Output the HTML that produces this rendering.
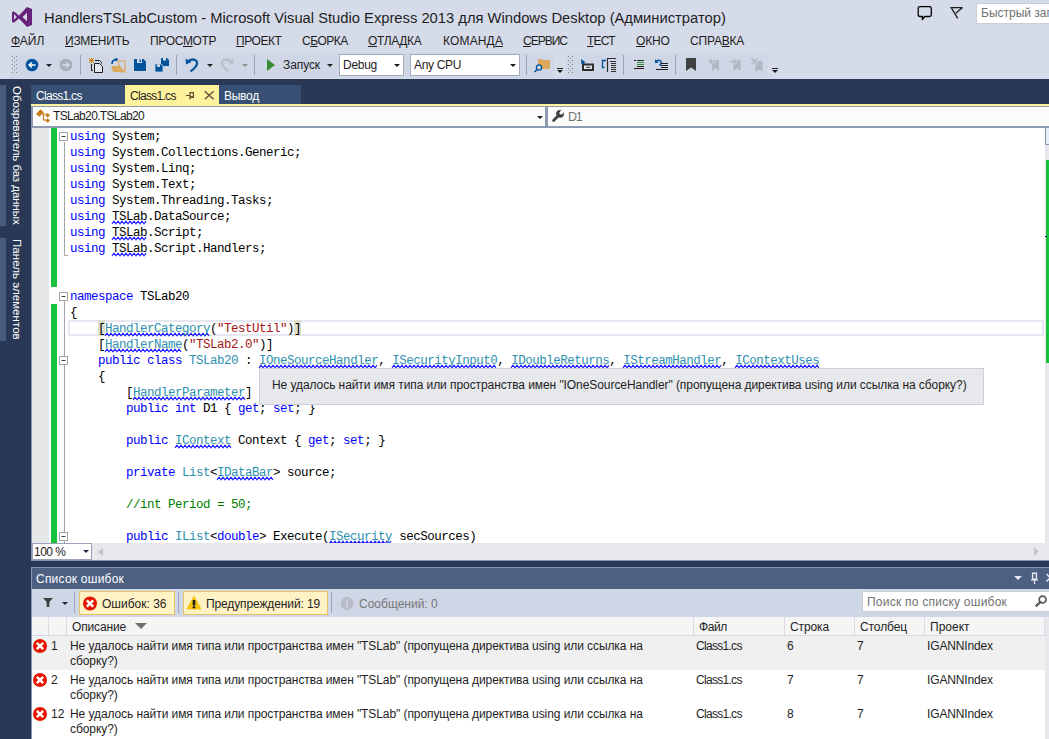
<!DOCTYPE html>
<html><head><meta charset="utf-8">
<style>
*{margin:0;padding:0;box-sizing:border-box}
html,body{width:1049px;height:739px;overflow:hidden;background:#D6DBE9;font-family:"Liberation Sans",sans-serif;font-size:12px;color:#1E1E1E}
.a{position:absolute;white-space:nowrap}
#title{left:44px;top:9px;font-size:15.5px;color:#1E1E1E;transform:scaleX(0.951);transform-origin:0 0}
.mi{top:34px;font-size:12px;color:#1E1E1E}
.mi u{text-decoration:underline}
#tb1{left:10px;top:53px;width:544px;height:25px;background:#CFD6E5}
.combo{background:#fff;border:1px solid #A3AABB}
#tb2{left:566px;top:53px;width:202px;height:25px;background:#CFD6E5}
#dark{left:0;top:79px;width:1049px;height:660px;background:#293955}
.vt{writing-mode:vertical-rl;font-size:11.5px;color:#fff}
.et{font-size:12px;color:#1E1E1E}
.tab{top:85px;height:19px;font-size:12px;padding:4px 0 0 5px;color:#fff}
#yl{left:31px;top:104px;width:1018px;height:2px;background:#FFF29D}

#ed{left:31px;top:128px;width:1018px;height:432px;background:#fff}
#code{left:70px;top:128.5px;font-family:"Liberation Mono",monospace;font-size:12.5px;letter-spacing:-0.5px;line-height:16px;color:#000;white-space:pre}
.k{color:#0000FF}.t{color:#2B91AF}.s{color:#A31515}.c{color:#008000}
#err{left:31px;top:567px;width:1018px;height:172px;background:#fff}
</style></head><body>
<svg class="a" style="left:12px;top:7px" width="20" height="20" viewBox="0 0 20 20"><path fill="#68217A" fill-rule="evenodd" d="M0 5.2 L1.8 4.3 L7 8.6 L15 0 L20 2.1 L20 17.9 L15 20 L7 11.4 L1.8 15.7 L0 14.8 Z M2 7.3 L2 12.7 L4.9 10 Z M15 5.8 L10.5 10 L15 14.2 Z"/></svg>
<div class="a" id="title">HandlersTSLabCustom - Microsoft Visual Studio Express 2013 для Windows Desktop (Администратор)</div>
<svg class="a" style="left:917px;top:6px" width="16" height="15" viewBox="0 0 16 15"><path d="M3 0.7 H12.5 Q14.3 0.7 14.3 2.5 V8.7 Q14.3 10.5 12.5 10.5 H7.8 L5.3 13.6 L5.5 10.5 H3 Q1.2 10.5 1.2 8.7 V2.5 Q1.2 0.7 3 0.7 Z" fill="none" stroke="#000" stroke-width="1.3" stroke-linejoin="round"/></svg>
<svg class="a" style="left:950px;top:7px" width="14" height="13" viewBox="0 0 14 13"><path d="M12.6 0.6 H1.2 L7.7 11.4 M12.6 0.6 L5.8 6.3" fill="none" stroke="#1E1E1E" stroke-width="1.3"/></svg>
<div class="a" style="left:976px;top:3px;width:80px;height:21px;background:#fff;border:1px solid #CCCEDB"></div>
<div class="a" style="left:981px;top:6px;font-size:12px;color:#717171">Быстрый запуск</div>
<div class="a mi" style="left:11px"><u>Ф</u>АЙЛ</div>
<div class="a mi" style="left:65px;letter-spacing:-0.25px"><u>И</u>ЗМЕНИТЬ</div>
<div class="a mi" style="left:150px;letter-spacing:-0.33px">ПРОС<u>М</u>ОТР</div>
<div class="a mi" style="left:236px;letter-spacing:-0.43px"><u>П</u>РОЕКТ</div>
<div class="a mi" style="left:302px;letter-spacing:-0.5px">С<u>Б</u>ОРКА</div>
<div class="a mi" style="left:368px;letter-spacing:-0.34px"><u>О</u>ТЛАДКА</div>
<div class="a mi" style="left:443px;letter-spacing:0.15px">КОМАНД<u>А</u></div>
<div class="a mi" style="left:523px;letter-spacing:-1.0px"><u>С</u>ЕРВИС</div>
<div class="a mi" style="left:587px;letter-spacing:-0.8px"><u>Т</u>ЕСТ</div>
<div class="a mi" style="left:636px;letter-spacing:-0.15px"><u>О</u>КНО</div>
<div class="a mi" style="left:690px;letter-spacing:-0.2px">СПРА<u>В</u>КА</div>
<div class="a" id="tb1"></div>
<div class="a" id="tb2"></div>
<div class="a" style="left:554px;top:53px;width:12px;height:25px;background:#D6DBE9"></div>
<div class="a" style="left:769px;top:53px;width:11px;height:25px;background:#D6DBE9"></div>
<svg class="a" style="left:0;top:50px" width="800" height="30" viewBox="0 50 800 30">
 <!-- grips -->
 <g fill="#80868F">
  <rect x="12" y="56" width="1" height="1"/><rect x="14" y="58" width="1" height="1"/><rect x="12" y="60" width="1" height="1"/><rect x="14" y="62" width="1" height="1"/><rect x="12" y="64" width="1" height="1"/><rect x="14" y="66" width="1" height="1"/><rect x="12" y="68" width="1" height="1"/><rect x="14" y="70" width="1" height="1"/><rect x="12" y="72" width="1" height="1"/>
  <rect x="16" y="56" width="1" height="1"/><rect x="16" y="60" width="1" height="1"/><rect x="16" y="64" width="1" height="1"/><rect x="16" y="68" width="1" height="1"/><rect x="16" y="72" width="1" height="1"/>
  <rect x="568" y="56" width="1" height="1"/><rect x="570" y="58" width="1" height="1"/><rect x="568" y="60" width="1" height="1"/><rect x="570" y="62" width="1" height="1"/><rect x="568" y="64" width="1" height="1"/><rect x="570" y="66" width="1" height="1"/><rect x="568" y="68" width="1" height="1"/><rect x="570" y="70" width="1" height="1"/><rect x="568" y="72" width="1" height="1"/>
  <rect x="572" y="56" width="1" height="1"/><rect x="572" y="60" width="1" height="1"/><rect x="572" y="64" width="1" height="1"/><rect x="572" y="68" width="1" height="1"/><rect x="572" y="72" width="1" height="1"/>
 </g>
 <!-- separators -->
 <g fill="#9AA3B8">
  <rect x="80" y="55" width="1" height="20"/><rect x="176" y="55" width="1" height="20"/><rect x="254" y="55" width="1" height="20"/><rect x="526" y="55" width="1" height="20"/><rect x="623" y="55" width="1" height="20"/><rect x="675" y="55" width="1" height="20"/>
 </g>
 <!-- back -->
 <circle cx="32" cy="65" r="6.3" fill="#00539C"/>
 <path d="M35.5 65 H29.5 M31.8 62.5 L29.2 65 L31.8 67.5" stroke="#fff" stroke-width="1.6" fill="none"/>
 <path d="M46 64 H52 L49 67 Z" fill="#1E1E1E"/>
 <circle cx="66" cy="65" r="6.3" fill="#A8AEBB"/>
 <path d="M62.5 65 H68.5 M66.2 62.5 L68.8 65 L66.2 67.5" stroke="#D6DBE9" stroke-width="1.6" fill="none"/>
 <!-- new project -->
 <g fill="#D08A1A"><rect x="89" y="58" width="1" height="1"/><rect x="91" y="58" width="1" height="1"/><rect x="93" y="58" width="1" height="1"/><rect x="90" y="59" width="3" height="3"/><rect x="89" y="60" width="1" height="1"/><rect x="93" y="60" width="1" height="1"/><rect x="89" y="62" width="1" height="1"/><rect x="91" y="62" width="1" height="1"/><rect x="93" y="62" width="1" height="1"/></g>
 <path d="M91.5 64 V70.5 H93 M95 60.5 H99.5 L101.5 62.5 V63.5" stroke="#1E1E1E" stroke-width="1" fill="none"/>
 <path d="M94.5 63.5 H99.5 L102.5 66.5 V72.5 H94.5 Z" fill="#E6E8F0" stroke="#1E1E1E" stroke-width="1"/>
 <!-- open -->
 <path d="M112 64 Q112 59.5 117 59.5" stroke="#00539C" stroke-width="1.7" fill="none"/>
 <path d="M115.5 57.5 L118.5 59.5 L115.5 61.5 Z" fill="#00539C"/>
 <path d="M118 61 H125 V72 H121 Z" fill="none" stroke="#DCA85B" stroke-width="1.2"/>
 <path d="M111 66 H120 L125 72 H113 Z" fill="#DCA85B"/>
 <!-- save -->
 <path d="M134 59 H143.5 L146 61.5 V71 H134 Z" fill="#00539C"/>
 <rect x="137" y="59" width="5" height="4" fill="#D6DBE9"/><rect x="139.5" y="59.5" width="1.5" height="2.5" fill="#00539C"/>
 <!-- save all -->
 <path d="M161 58 H167 L169 60 V66 H161 Z" fill="#00539C"/>
 <rect x="163" y="58" width="3" height="2.5" fill="#D6DBE9"/>
 <path d="M155 64 H161 L163 66 V72 H155 Z" fill="#00539C" stroke="#CFD6E5" stroke-width="0.8"/>
 <rect x="157" y="64.4" width="3" height="2.5" fill="#D6DBE9"/>
 <!-- undo -->
 <path d="M188.5 61 Q193 58 196.5 61 Q198.5 64.5 193.5 69 L190.5 71.5" stroke="#00539C" stroke-width="2.2" fill="none"/>
 <path d="M185.5 58.5 L186 64.5 L191.5 62 Z" fill="#00539C"/>
 <path d="M207 64 H213 L210 67 Z" fill="#1E1E1E"/>
 <!-- redo -->
 <path d="M230.5 61 Q226 58 222.5 61 Q220.5 64.5 225.5 69 L228.5 71.5" stroke="#B9BEC8" stroke-width="2.2" fill="none"/>
 <path d="M233.5 58.5 L233 64.5 L227.5 62 Z" fill="#B9BEC8"/>
 <path d="M242 64 H248 L245 67 Z" fill="#8D8D8D"/>
 <!-- play -->
 <path d="M267 59 L275 65 L267 71 Z" fill="#388A34"/>
 <path d="M327 64 H333 L330 67 Z" fill="#1E1E1E"/>
 <!-- find in files -->
 <path d="M538 59 H542 L543 60 H550 V69 H538 Z" fill="#DCA85B"/>
 <circle cx="539" cy="67.5" r="2.6" fill="#CFD6E5" stroke="#00539C" stroke-width="1.3"/>
 <path d="M537 69.5 L534.5 72" stroke="#00539C" stroke-width="1.6"/>
 <rect x="557" y="68" width="6" height="1" fill="#1E1E1E"/><path d="M557 70 H563 L560 73 Z" fill="#1E1E1E"/>
 <rect x="772" y="68" width="6" height="1" fill="#1E1E1E"/><path d="M772 70 H778 L775 73 Z" fill="#1E1E1E"/>
 <!-- icon1 -->
 <path d="M581.2 59 L581.2 64.5 L582.6 63.3 L583.8 65.6 L585 65 L583.9 62.8 L585.8 62.6 Z" fill="#00539C"/>
 <rect x="583" y="64.5" width="10" height="5.5" fill="#E6E8F0" stroke="#2D2D2D" stroke-width="2"/>
 <path d="M586 67.3 H590.5" stroke="#2D2D2D" stroke-width="1"/>
 <!-- icon2 -->
 <path d="M604.5 60.5 H602.5 V67.5 H604.5" fill="none" stroke="#00539C" stroke-width="1.3"/>
 <path d="M604 60.5 H606" stroke="#00539C" stroke-width="1.3"/>
 <path d="M607.5 58 V72" stroke="#2D2D2D" stroke-width="1.2"/>
 <path d="M607 58.5 H616 M610 61.5 H616 M611 63.5 H616 M611 65.5 H616 M611 67.5 H616 M611 69.5 H616 M611 71.5 H616" stroke="#2D2D2D" stroke-width="1"/>
 <!-- icon3 -->
 <path d="M634 60.5 H636" stroke="#1E1E1E" stroke-width="1"/>
 <path d="M637 60.5 H644 M637 66.5 H644" stroke="#1E1E1E" stroke-width="1"/>
 <path d="M637 62.5 H644 M637 64.5 H644" stroke="#388A34" stroke-width="1"/>
 <path d="M634 68.5 H644" stroke="#1E1E1E" stroke-width="1"/>
 <!-- icon4 -->
 <path d="M656 61.5 Q659 59 661 61.5 Q662 63.5 659.5 65.5" stroke="#00539C" stroke-width="1.4" fill="none"/>
 <path d="M655 59 V63 H658.5 Z" fill="#00539C"/>
 <path d="M661 63.5 H668 M661 65.5 H668 M661 67.5 H668 M656 69.5 H668" stroke="#1E1E1E" stroke-width="1"/>
 <!-- bookmark -->
 <path d="M686 58 H696 V71 L691 67.5 L686 71 Z" fill="#424242"/>
 <!-- gray bookmark ops -->
 <path d="M712 60 H719 V71 L715.5 68.3 L712 71 Z" fill="#B0B6C2"/>
 <path d="M716 61.5 H709.5 M711.7 59.2 L709.3 61.5 L711.7 63.8" stroke="#CFD6E5" stroke-width="3" fill="none"/>
 <path d="M716 61.5 H709.5 M711.7 59.2 L709.3 61.5 L711.7 63.8" stroke="#B0B6C2" stroke-width="1.5" fill="none"/>
 <path d="M733.5 60 H740.5 V71 L737 68.3 L733.5 71 Z" fill="#B0B6C2"/>
 <path d="M729.5 61.5 H736 M733.8 59.2 L736.2 61.5 L733.8 63.8" stroke="#CFD6E5" stroke-width="3" fill="none"/>
 <path d="M729.5 61.5 H736 M733.8 59.2 L736.2 61.5 L733.8 63.8" stroke="#B0B6C2" stroke-width="1.5" fill="none"/>
 <path d="M755.5 61 H762.5 V72 L759 69.3 L755.5 72 Z" fill="#B0B6C2"/>
 <path d="M751.5 58.5 L757.5 64.5 M757.5 58.5 L751.5 64.5" stroke="#CFD6E5" stroke-width="3"/>
 <path d="M751.5 58.5 L757.5 64.5 M757.5 58.5 L751.5 64.5" stroke="#B0B6C2" stroke-width="1.5"/>
</svg>
<div class="a combo" style="left:339px;top:54px;width:65px;height:22px"></div>
<div class="a combo" style="left:410px;top:54px;width:110px;height:22px"></div>
<svg class="a" style="left:390px;top:60px" width="130" height="10"><path d="M4 4 H10 L7 7 Z M120 4 H126 L123 7 Z" fill="#1E1E1E"/></svg>
<div class="a" style="left:283px;top:58px;font-size:12px;letter-spacing:-0.09px">Запуск</div>
<div class="a" style="left:343px;top:58px;font-size:12px;letter-spacing:-0.28px">Debug</div>
<div class="a" style="left:414px;top:58px;font-size:12px;letter-spacing:-0.34px">Any CPU</div>
<div class="a" id="dark"></div>
<div class="a" style="left:0;top:85px;width:6px;height:141px;background:#465A7E"></div>
<div class="a" style="left:0;top:238px;width:6px;height:103px;background:#465A7E"></div>
<div class="a vt" style="left:10.5px;top:85.5px;letter-spacing:-0.05px">Обозреватель баз данных</div>
<div class="a vt" style="left:10.5px;top:239px;letter-spacing:0.05px">Панель элементов</div>
<div class="a tab" style="left:31px;width:94px;background:#364F72;letter-spacing:-0.7px">Class1.cs</div>
<div class="a tab" style="left:125px;width:94px;background:#FFF29D;color:#1E1E1E;letter-spacing:-0.7px">Class1.cs</div>
<svg class="a" style="left:183px;top:89px" width="34" height="13" viewBox="0 0 34 13"><path d="M3 6.5 H7 M7 3 V10.5" stroke="#5A5030" stroke-width="1.2" fill="none"/><path d="M7 3.6 H10.4 V8.4 H7" stroke="#5A5030" stroke-width="1.2" fill="none"/><rect x="7" y="7.2" width="4" height="1.8" fill="#5A5030"/><path d="M21.8 2.3 L30.6 10.2 M30.6 2.3 L21.8 10.2" stroke="#5F5840" stroke-width="1.5"/></svg>
<div class="a tab" style="left:219px;width:82px;background:#364F72;letter-spacing:-0.26px">Вывод</div>
<div class="a" id="yl"></div>
<div class="a" style="left:31px;top:106px;width:1018px;height:22px;background:#8E99B2"></div>
<div class="a" style="left:33px;top:107px;width:512px;height:19px;background:#FCFCFC"></div>
<div class="a" style="left:548px;top:107px;width:501px;height:19px;background:#FCFCFC"></div>
<svg class="a" style="left:33px;top:106px" width="20" height="20" viewBox="0 0 20 20"><path d="M3 8 L7.5 3.3 L10.8 6.3 L6.3 10.8 Z M12.2 9.2 L14.6 6.9 L17 9.2 L14.6 11.5 Z M12.4 14.5 L14.7 12.2 L17 14.5 L14.7 16.8 Z" fill="#C57E16"/><path d="M9 8 H13 M10.5 8 V14 H13" stroke="#C57E16" stroke-width="1.2" fill="none"/></svg>
<div class="a" style="left:53px;top:109px;font-size:12px;color:#1E1E1E;letter-spacing:-0.65px">TSLab20.TSLab20</div>
<svg class="a" style="left:536px;top:114px" width="8" height="6"><path d="M1 2 H7 L4 5 Z" fill="#1E1E1E"/></svg>
<svg class="a" style="left:550px;top:107px" width="18" height="18" viewBox="0 0 18 18"><path d="M3.6 13.4 L8.5 8.5" stroke="#424242" stroke-width="2.8" stroke-linecap="round"/><circle cx="10" cy="6.8" r="3.9" fill="#424242"/><circle cx="10.9" cy="5.9" r="1.5" fill="#FCFCFC"/><path d="M10 4.6 L12.2 6.9 L15.5 3.6 L13.3 1.3 Z" fill="#FCFCFC"/></svg>
<div class="a" style="left:568px;top:110px;font-size:12.5px;color:#717171;letter-spacing:-1.2px">D1</div>
<div class="a" style="left:31px;top:128px;width:1018px;height:433px;background:#8594B8"></div>
<div class="a" style="left:32px;top:128px;width:1017px;height:432px;background:#fff"></div>
<div class="a" style="left:32px;top:128px;width:17px;height:415px;background:#E6E7E8"></div>
<div class="a" style="left:51px;top:128px;width:6px;height:159px;background:#17C13B"></div>
<div class="a" style="left:51px;top:304px;width:6px;height:239px;background:#17C13B"></div>
<div class="a" style="left:68px;top:320px;width:976px;height:16px;border:2px solid #E6E7F0"></div>
<svg class="a" style="left:0;top:0" width="1049" height="560">
<rect x="98" y="320" width="7" height="16" fill="#DCDFCC"/>
<rect x="294" y="320" width="7" height="16" fill="#DCDFCC"/>
<path d="M112 223.8 L114 221.2 L116 223.8 L118 221.2 L120 223.8 L122 221.2 L124 223.8 L126 221.2 L128 223.8 L130 221.2 L132 223.8 L134 221.2 L136 223.8 L138 221.2 L140 223.8 L142 221.2 L144 223.8 L146 221.2 M112 239.8 L114 237.2 L116 239.8 L118 237.2 L120 239.8 L122 237.2 L124 239.8 L126 237.2 L128 239.8 L130 237.2 L132 239.8 L134 237.2 L136 239.8 L138 237.2 L140 239.8 L142 237.2 L144 239.8 L146 237.2 M112 255.8 L114 253.2 L116 255.8 L118 253.2 L120 255.8 L122 253.2 L124 255.8 L126 253.2 L128 255.8 L130 253.2 L132 255.8 L134 253.2 L136 255.8 L138 253.2 L140 255.8 L142 253.2 L144 255.8 L146 253.2 M105 335.8 L107 333.2 L109 335.8 L111 333.2 L113 335.8 L115 333.2 L117 335.8 L119 333.2 L121 335.8 L123 333.2 L125 335.8 L127 333.2 L129 335.8 L131 333.2 L133 335.8 L135 333.2 L137 335.8 L139 333.2 L141 335.8 L143 333.2 L145 335.8 L147 333.2 L149 335.8 L151 333.2 L153 335.8 L155 333.2 L157 335.8 L159 333.2 L161 335.8 L163 333.2 L165 335.8 L167 333.2 L169 335.8 L171 333.2 L173 335.8 L175 333.2 L177 335.8 L179 333.2 L181 335.8 L183 333.2 L185 335.8 L187 333.2 L189 335.8 L191 333.2 L193 335.8 L195 333.2 L197 335.8 L199 333.2 L201 335.8 L203 333.2 L205 335.8 L207 333.2 L209 335.8 M105 351.8 L107 349.2 L109 351.8 L111 349.2 L113 351.8 L115 349.2 L117 351.8 L119 349.2 L121 351.8 L123 349.2 L125 351.8 L127 349.2 L129 351.8 L131 349.2 L133 351.8 L135 349.2 L137 351.8 L139 349.2 L141 351.8 L143 349.2 L145 351.8 L147 349.2 L149 351.8 L151 349.2 L153 351.8 L155 349.2 L157 351.8 L159 349.2 L161 351.8 L163 349.2 L165 351.8 L167 349.2 L169 351.8 L171 349.2 L173 351.8 L175 349.2 L177 351.8 L179 349.2 L181 351.8 M259 367.8 L261 365.2 L263 367.8 L265 365.2 L267 367.8 L269 365.2 L271 367.8 L273 365.2 L275 367.8 L277 365.2 L279 367.8 L281 365.2 L283 367.8 L285 365.2 L287 367.8 L289 365.2 L291 367.8 L293 365.2 L295 367.8 L297 365.2 L299 367.8 L301 365.2 L303 367.8 L305 365.2 L307 367.8 L309 365.2 L311 367.8 L313 365.2 L315 367.8 L317 365.2 L319 367.8 L321 365.2 L323 367.8 L325 365.2 L327 367.8 L329 365.2 L331 367.8 L333 365.2 L335 367.8 L337 365.2 L339 367.8 L341 365.2 L343 367.8 L345 365.2 L347 367.8 L349 365.2 L351 367.8 L353 365.2 L355 367.8 L357 365.2 L359 367.8 L361 365.2 L363 367.8 L365 365.2 L367 367.8 L369 365.2 L371 367.8 L373 365.2 L375 367.8 L377 365.2 M392 367.8 L394 365.2 L396 367.8 L398 365.2 L400 367.8 L402 365.2 L404 367.8 L406 365.2 L408 367.8 L410 365.2 L412 367.8 L414 365.2 L416 367.8 L418 365.2 L420 367.8 L422 365.2 L424 367.8 L426 365.2 L428 367.8 L430 365.2 L432 367.8 L434 365.2 L436 367.8 L438 365.2 L440 367.8 L442 365.2 L444 367.8 L446 365.2 L448 367.8 L450 365.2 L452 367.8 L454 365.2 L456 367.8 L458 365.2 L460 367.8 L462 365.2 L464 367.8 L466 365.2 L468 367.8 L470 365.2 L472 367.8 L474 365.2 L476 367.8 L478 365.2 L480 367.8 L482 365.2 L484 367.8 L486 365.2 L488 367.8 L490 365.2 L492 367.8 L494 365.2 L496 367.8 M511 367.8 L513 365.2 L515 367.8 L517 365.2 L519 367.8 L521 365.2 L523 367.8 L525 365.2 L527 367.8 L529 365.2 L531 367.8 L533 365.2 L535 367.8 L537 365.2 L539 367.8 L541 365.2 L543 367.8 L545 365.2 L547 367.8 L549 365.2 L551 367.8 L553 365.2 L555 367.8 L557 365.2 L559 367.8 L561 365.2 L563 367.8 L565 365.2 L567 367.8 L569 365.2 L571 367.8 L573 365.2 L575 367.8 L577 365.2 L579 367.8 L581 365.2 L583 367.8 L585 365.2 L587 367.8 L589 365.2 L591 367.8 L593 365.2 L595 367.8 L597 365.2 L599 367.8 L601 365.2 L603 367.8 L605 365.2 L607 367.8 L609 365.2 M623 367.8 L625 365.2 L627 367.8 L629 365.2 L631 367.8 L633 365.2 L635 367.8 L637 365.2 L639 367.8 L641 365.2 L643 367.8 L645 365.2 L647 367.8 L649 365.2 L651 367.8 L653 365.2 L655 367.8 L657 365.2 L659 367.8 L661 365.2 L663 367.8 L665 365.2 L667 367.8 L669 365.2 L671 367.8 L673 365.2 L675 367.8 L677 365.2 L679 367.8 L681 365.2 L683 367.8 L685 365.2 L687 367.8 L689 365.2 L691 367.8 L693 365.2 L695 367.8 L697 365.2 L699 367.8 L701 365.2 L703 367.8 L705 365.2 L707 367.8 L709 365.2 L711 367.8 L713 365.2 L715 367.8 L717 365.2 L719 367.8 L721 365.2 M735 367.8 L737 365.2 L739 367.8 L741 365.2 L743 367.8 L745 365.2 L747 367.8 L749 365.2 L751 367.8 L753 365.2 L755 367.8 L757 365.2 L759 367.8 L761 365.2 L763 367.8 L765 365.2 L767 367.8 L769 365.2 L771 367.8 L773 365.2 L775 367.8 L777 365.2 L779 367.8 L781 365.2 L783 367.8 L785 365.2 L787 367.8 L789 365.2 L791 367.8 L793 365.2 L795 367.8 L797 365.2 L799 367.8 L801 365.2 L803 367.8 L805 365.2 L807 367.8 L809 365.2 L811 367.8 L813 365.2 L815 367.8 L817 365.2 L819 367.8 M133 399.8 L135 397.2 L137 399.8 L139 397.2 L141 399.8 L143 397.2 L145 399.8 L147 397.2 L149 399.8 L151 397.2 L153 399.8 L155 397.2 L157 399.8 L159 397.2 L161 399.8 L163 397.2 L165 399.8 L167 397.2 L169 399.8 L171 397.2 L173 399.8 L175 397.2 L177 399.8 L179 397.2 L181 399.8 L183 397.2 L185 399.8 L187 397.2 L189 399.8 L191 397.2 L193 399.8 L195 397.2 L197 399.8 L199 397.2 L201 399.8 L203 397.2 L205 399.8 L207 397.2 L209 399.8 L211 397.2 L213 399.8 L215 397.2 L217 399.8 L219 397.2 L221 399.8 L223 397.2 L225 399.8 L227 397.2 L229 399.8 L231 397.2 L233 399.8 L235 397.2 L237 399.8 L239 397.2 L241 399.8 L243 397.2 L245 399.8 M175 447.8 L177 445.2 L179 447.8 L181 445.2 L183 447.8 L185 445.2 L187 447.8 L189 445.2 L191 447.8 L193 445.2 L195 447.8 L197 445.2 L199 447.8 L201 445.2 L203 447.8 L205 445.2 L207 447.8 L209 445.2 L211 447.8 L213 445.2 L215 447.8 L217 445.2 L219 447.8 L221 445.2 L223 447.8 L225 445.2 L227 447.8 L229 445.2 L231 447.8 M217 479.8 L219 477.2 L221 479.8 L223 477.2 L225 479.8 L227 477.2 L229 479.8 L231 477.2 L233 479.8 L235 477.2 L237 479.8 L239 477.2 L241 479.8 L243 477.2 L245 479.8 L247 477.2 L249 479.8 L251 477.2 L253 479.8 L255 477.2 L257 479.8 L259 477.2 L261 479.8 L263 477.2 L265 479.8 L267 477.2 L269 479.8 L271 477.2 L273 479.8 M329 543.8 L331 541.2 L333 543.8 L335 541.2 L337 543.8 L339 541.2 L341 543.8 L343 541.2 L345 543.8 L347 541.2 L349 543.8 L351 541.2 L353 543.8 L355 541.2 L357 543.8 L359 541.2 L361 543.8 L363 541.2 L365 543.8 L367 541.2 L369 543.8 L371 541.2 L373 543.8 L375 541.2 L377 543.8 L379 541.2 L381 543.8 L383 541.2 L385 543.8 L387 541.2 L389 543.8 L391 541.2" stroke="#1A1AFF" stroke-width="1.1" fill="none"/>
<g fill="#fff" stroke="#A5A5A5" stroke-width="1">
<rect x="59.5" y="132.5" width="8" height="8"/>
<rect x="59.5" y="292.5" width="8" height="8"/>
<rect x="59.5" y="356.5" width="8" height="8"/>
<rect x="59.5" y="532.5" width="8" height="8"/>
</g>
<path d="M61.5 136.5 H65.5 M61.5 296.5 H65.5 M61.5 360.5 H65.5 M61.5 536.5 H65.5" stroke="#424242" stroke-width="1"/>
<path d="M64.5 142 V255.5 H68 M64.5 301 V356 M64.5 365 V532 M64.5 541 V543" stroke="#A5A5A5" stroke-width="1" fill="none"/>
</svg>
<div class="a" id="code"><span class="k">using</span> System;
<span class="k">using</span> System.Collections.Generic;
<span class="k">using</span> System.Linq;
<span class="k">using</span> System.Text;
<span class="k">using</span> System.Threading.Tasks;
<span class="k">using</span> TSLab.DataSource;
<span class="k">using</span> TSLab.Script;
<span class="k">using</span> TSLab.Script.Handlers;


<span class="k">namespace</span> TSLab20
{
    [<span class="t">HandlerCategory</span>(<span class="s">"TestUtil"</span>)]
    [<span class="t">HandlerName</span>(<span class="s">"TSLab2.0"</span>)]
    <span class="k">public</span> <span class="k">class</span> <span class="t">TSLab20</span> : <span class="t">IOneSourceHandler</span>, <span class="t">ISecurityInput0</span>, <span class="t">IDoubleReturns</span>, <span class="t">IStreamHandler</span>, <span class="t">IContextUses</span>
    {
        [<span class="t">HandlerParameter</span>]
        <span class="k">public</span> <span class="k">int</span> D1 { <span class="k">get</span>; <span class="k">set</span>; }

        <span class="k">public</span> <span class="t">IContext</span> Context { <span class="k">get</span>; <span class="k">set</span>; }

        <span class="k">private</span> <span class="t">List</span>&lt;<span class="t">IDataBar</span>&gt; source;

        <span class="c">//int Period = 50;</span>

        <span class="k">public</span> <span class="t">IList</span>&lt;<span class="k">double</span>&gt; Execute(<span class="t">ISecurity</span> secSources)</div>
<div class="a" style="left:32px;top:543px;width:1017px;height:17px;background:#E8E8EC"></div>
<div class="a" style="left:32px;top:543px;width:60px;height:17px;background:#fff;border:1px solid #98A2B8"></div>
<div class="a" style="left:34px;top:545px;font-size:12px;color:#1E1E1E;letter-spacing:-0.5px">100&nbsp;%</div>
<svg class="a" style="left:80px;top:546px" width="30" height="12"><path d="M3 4 H9 L6 7 Z" fill="#1B293E"/><path d="M23 2 L18 6 L23 10 Z" fill="#C2C3C9"/></svg>
<svg class="a" style="left:1030px;top:543px" width="19" height="17"><path d="M4 4 L9 8.5 L4 13 Z" fill="#C2C3C9"/></svg>
<div class="a" style="left:1045px;top:128px;width:4px;height:415px;background:#E8E8EC"></div>
<div class="a" style="left:1045px;top:128px;width:4px;height:17px;background:#E6ECF8;border-left:1px solid #8B96B0;border-bottom:1px solid #8B96B0"></div>
<div class="a" style="left:1046px;top:160px;width:3px;height:203px;background:#17C13B"></div>
<div class="a" style="left:1045px;top:236px;width:2px;height:1px;background:#00008B"></div>
<div class="a" style="left:31px;top:567px;width:1018px;height:172px;background:#8594B8"></div>
<div class="a" style="left:32px;top:568px;width:1017px;height:171px;background:#fff"></div>
<div class="a" style="left:32px;top:568px;width:1017px;height:21px;background:#4D6082"></div>
<div class="a" style="left:36px;top:572px;font-size:12px;color:#fff;letter-spacing:0.23px">Список ошибок</div>
<svg class="a" style="left:1010px;top:570px" width="39" height="16" viewBox="0 0 39 16"><path d="M4 6 H12 L8 10 Z" fill="#E6E9F0"/><path d="M22.6 3.3 H26.4 V9.3 H22.6 Z" fill="none" stroke="#E6E9F0" stroke-width="1.4"/><path d="M21 9.8 H28 M24.5 10 V14" stroke="#E6E9F0" stroke-width="1.2"/><path d="M36.5 4 L44 11.5 M44 4 L36.5 11.5" stroke="#E6E9F0" stroke-width="1.5"/></svg>
<div class="a" style="left:32px;top:589px;width:1017px;height:28px;background:#CFD6E5"></div>
<svg class="a" style="left:32px;top:589px" width="320" height="27" viewBox="32 589 320 27"><path d="M43 598 H53 L49.3 602 V607 H46.7 V602 Z" fill="#3C3C3C"/><path d="M62 602 H68 L65 605 Z" fill="#1B293E"/><rect x="74" y="592" width="1" height="21" fill="#9AA3B8"/><rect x="178" y="592" width="1" height="21" fill="#9AA3B8"/><rect x="331" y="592" width="1" height="21" fill="#9AA3B8"/></svg>
<div class="a" style="left:79px;top:591px;width:96px;height:24px;background:#FFF3C6;border:1px solid #E5C365"></div>
<svg class="a" style="left:83px;top:595.5px" width="15" height="15" viewBox="0 0 15 15"><circle cx="7" cy="7.5" r="7" fill="#E51400"/><path d="M3.8 4.3 L10.2 10.7 M10.2 4.3 L3.8 10.7" stroke="#fff" stroke-width="2.5"/></svg>
<div class="a" style="left:102px;top:597px;font-size:12px">Ошибок: 36</div>
<div class="a" style="left:183px;top:591px;width:145px;height:24px;background:#FFF3C6;border:1px solid #E5C365"></div>
<svg class="a" style="left:186px;top:595px" width="16" height="16" viewBox="0 0 16 16"><path d="M8 1.8 L14.4 13.6 H1.6 Z" fill="#F9C515" stroke="#F9C515" stroke-width="1.6" stroke-linejoin="round"/><rect x="6.7" y="5" width="2.6" height="5.5" fill="#1E1E1E"/><rect x="6.7" y="11.3" width="2.6" height="2" fill="#1E1E1E"/></svg>
<div class="a" style="left:206px;top:597px;font-size:12px;letter-spacing:-0.12px">Предупреждений: 19</div>
<svg class="a" style="left:340px;top:596px" width="15" height="15" viewBox="0 0 15 15"><circle cx="7" cy="7.5" r="6.5" fill="#B8BCC6"/><rect x="6.1" y="6" width="1.8" height="5.5" fill="#CFD6E5"/><rect x="6.1" y="3.3" width="1.8" height="1.8" fill="#CFD6E5"/></svg>
<div class="a" style="left:359px;top:597px;font-size:12px;color:#777777">Сообщений: 0</div>
<div class="a" style="left:862px;top:591px;width:200px;height:21px;background:#fff;border:1px solid #CCCEDB"></div>
<div class="a" style="left:867px;top:595px;font-size:12px;color:#717171;letter-spacing:0.24px">Поиск по списку ошибок</div>
<svg class="a" style="left:1034px;top:594px" width="14" height="14" viewBox="0 0 14 14"><circle cx="8.6" cy="5.5" r="3.4" fill="none" stroke="#555" stroke-width="1.7"/><path d="M6.2 8 L1.8 12.4" stroke="#555" stroke-width="2.3"/></svg>
<div class="a" style="left:32px;top:617px;width:1017px;height:19px;background:#F5F5F5;border-bottom:1px solid #DADAE3"></div>
<div class="a" style="left:48px;top:617px;width:1px;height:18px;background:#DADAE3"></div>
<div class="a" style="left:66px;top:617px;width:1px;height:18px;background:#DADAE3"></div>
<div class="a" style="left:693px;top:617px;width:1px;height:18px;background:#DADAE3"></div>
<div class="a" style="left:784px;top:617px;width:1px;height:18px;background:#DADAE3"></div>
<div class="a" style="left:854px;top:617px;width:1px;height:18px;background:#DADAE3"></div>
<div class="a" style="left:924px;top:617px;width:1px;height:18px;background:#DADAE3"></div>
<div class="a" style="left:1044px;top:617px;width:1px;height:18px;background:#DADAE3"></div>
<div class="a et" style="left:72px;top:620px;letter-spacing:-0.15px">Описание</div>
<svg class="a" style="left:134px;top:622px" width="14" height="8"><path d="M1 1 H13 L7 7 Z" fill="#717171"/></svg>
<div class="a et" style="left:699px;top:620px;letter-spacing:-0.38px">Файл</div>
<div class="a et" style="left:790px;top:620px;letter-spacing:-0.12px">Строка</div>
<div class="a et" style="left:860px;top:620px;letter-spacing:-0.1px">Столбец</div>
<div class="a et" style="left:930px;top:620px">Проект</div>
<div class="a" style="left:32px;top:636px;width:1017px;height:34px;background:#F0F0F0"></div>
<svg class="a" style="left:33px;top:638.5px" width="15" height="15" viewBox="0 0 15 15"><circle cx="7" cy="7" r="7" fill="#E51400"/><path d="M3.8 3.8 L10.2 10.2 M10.2 3.8 L3.8 10.2" stroke="#fff" stroke-width="2.5"/></svg>
<div class="a et" style="left:51px;top:639px">1</div>
<div class="a et" style="left:70px;top:639px;line-height:15px;letter-spacing:-0.08px">Не удалось найти имя типа или пространства имен "TSLab" (пропущена директива using или ссылка на<br>сборку?)</div>
<div class="a et" style="left:696px;top:639px;letter-spacing:-0.7px">Class1.cs</div>
<div class="a et" style="left:787px;top:639px">6</div>
<div class="a et" style="left:857px;top:639px">7</div>
<div class="a et" style="left:927px;top:639px;letter-spacing:-0.14px">IGANNIndex</div>
<div class="a" style="left:32px;top:670px;width:1017px;height:34px;background:#fff"></div>
<svg class="a" style="left:33px;top:672.5px" width="15" height="15" viewBox="0 0 15 15"><circle cx="7" cy="7" r="7" fill="#E51400"/><path d="M3.8 3.8 L10.2 10.2 M10.2 3.8 L3.8 10.2" stroke="#fff" stroke-width="2.5"/></svg>
<div class="a et" style="left:51px;top:673px">2</div>
<div class="a et" style="left:70px;top:673px;line-height:15px;letter-spacing:-0.08px">Не удалось найти имя типа или пространства имен "TSLab" (пропущена директива using или ссылка на<br>сборку?)</div>
<div class="a et" style="left:696px;top:673px;letter-spacing:-0.7px">Class1.cs</div>
<div class="a et" style="left:787px;top:673px">7</div>
<div class="a et" style="left:857px;top:673px">7</div>
<div class="a et" style="left:927px;top:673px;letter-spacing:-0.14px">IGANNIndex</div>
<div class="a" style="left:32px;top:704px;width:1017px;height:34px;background:#fff"></div>
<svg class="a" style="left:33px;top:706.5px" width="15" height="15" viewBox="0 0 15 15"><circle cx="7" cy="7" r="7" fill="#E51400"/><path d="M3.8 3.8 L10.2 10.2 M10.2 3.8 L3.8 10.2" stroke="#fff" stroke-width="2.5"/></svg>
<div class="a et" style="left:51px;top:707px">12</div>
<div class="a et" style="left:70px;top:707px;line-height:15px;letter-spacing:-0.08px">Не удалось найти имя типа или пространства имен "TSLab" (пропущена директива using или ссылка на<br>сборку?)</div>
<div class="a et" style="left:696px;top:707px;letter-spacing:-0.7px">Class1.cs</div>
<div class="a et" style="left:787px;top:707px">8</div>
<div class="a et" style="left:857px;top:707px">7</div>
<div class="a et" style="left:927px;top:707px;letter-spacing:-0.14px">IGANNIndex</div>
<div class="a" style="left:1045px;top:617px;width:4px;height:122px;background:#E8E8EC"></div>
<div class="a" style="left:259px;top:368px;width:725px;height:37px;background:#E7E8EC;border:1px solid #CCCEDB"></div>
<div class="a" style="left:272px;top:378px;font-size:12px;color:#1E1E1E;letter-spacing:-0.07px">Не удалось найти имя типа или пространства имен "IOneSourceHandler" (пропущена директива using или ссылка на сборку?)</div>
</body></html>
